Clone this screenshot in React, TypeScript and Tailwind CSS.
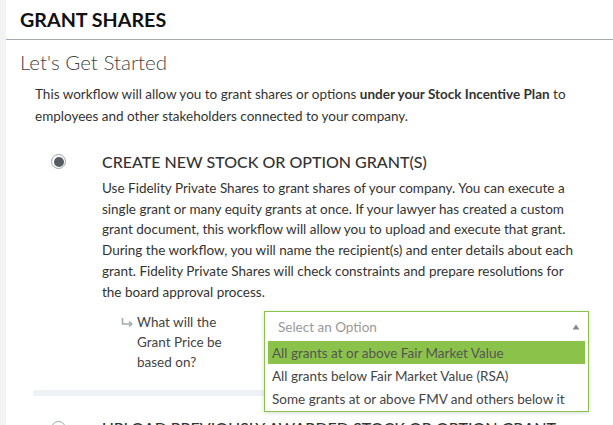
import React from "react";

function Radio({ checked }: { checked?: boolean }) {
  return (
    <div className="w-[15px] h-[15px] rounded-full border border-[#9aa3a8] bg-white flex items-center justify-center">
      {checked && <div className="w-[10px] h-[10px] rounded-full bg-[#555c63]" />}
    </div>
  );
}

export default function App() {
  return (
    <div
      className="flex w-[613px] h-[425px] overflow-hidden bg-white text-[#333]"
      style={{ fontFamily: "Lato, 'Noto Sans', sans-serif" }}
    >
      <div className="w-[6px] shrink-0 bg-[#f3f3f3]" />
      <div className="flex-1 min-w-0">
        <div className="h-[40px] border-b border-[#a3abae] pl-[14px] pt-[9px]">
          <h1 className="text-[19.7px] leading-[22px] font-bold text-[#111]">GRANT SHARES</h1>
        </div>
        <h2 className="pl-[14px] pt-[10px] text-[20.5px] leading-[24px] font-light text-[#444]">Let's Get Started</h2>
        <p className="ml-[29px] mt-[9px] text-[13.5px] leading-[22px] text-[#333]">
          This workflow will allow you to grant shares or options <b>under your Stock Incentive Plan</b> to employees and other stakeholders connected to your company.
        </p>
        <div className="ml-[27px] mr-[30px] mt-[24px] pb-[18px] border-b-[6px] border-[#eff2f5]">
          <div className="flex">
            <div className="w-[69px] shrink-0 pl-[18px] pt-[3px]">
              <Radio checked />
            </div>
            <div className="flex-1 min-w-0">
              <h3 className="text-[16px] leading-[22px] font-medium text-[#333]">CREATE NEW STOCK OR OPTION GRANT(S)</h3>
              <p className="mt-[5px] text-[13.5px] leading-[20.7px] text-[#333]">
                Use Fidelity Private Shares to grant shares of your company. You can execute a single grant or many equity grants at once. If your lawyer has created a custom grant document, this workflow will allow you to upload and execute that grant. During the workflow, you will name the recipient(s) and enter details about each grant. Fidelity Private Shares will check constraints and prepare resolutions for the board approval process.
              </p>
              <div className="mt-[9px] flex">
                <div className="w-[162px] shrink-0 pl-[19px] flex pt-[1px]">
                  <span className="w-[16px] shrink-0 pt-[6px]">
                    <svg width="12" height="9" viewBox="0 0 12 9" fill="none">
                      <path d="M1.5 0 V6 H10" stroke="#a0aaad" strokeWidth="1.6" />
                      <path d="M8 3.5 L10.8 6 L8 8.5" stroke="#a0aaad" strokeWidth="1.5" />
                    </svg>
                  </span>
                  <span className="w-[100px] text-[13.5px] leading-[20px] text-[#444]">What will the Grant Price be based on?</span>
                </div>
                <div className="relative w-[325px] h-[60px] shrink-0">
                  <div className="absolute left-0 top-0 w-[325px] border border-[#8bc34a] bg-white shadow-[0_1px_4px_rgba(0,0,0,0.15)] z-10">
                    <div className="h-[29px] flex items-center justify-between pl-[13px] pr-[8px]">
                      <span className="text-[13.5px] text-[#999]">Select an Option</span>
                      <svg width="8" height="6" viewBox="0 0 8 6">
                        <path d="M4 0.5 L7.5 5.5 L0.5 5.5 Z" fill="#888" />
                      </svg>
                    </div>
                    <ul className="px-[3px] pb-[1px]">
                      <li className="h-[23px] flex items-center pl-[4px] bg-[#8bc34a] text-[13.5px] text-[#555]">All grants at or above Fair Market Value</li>
                      <li className="h-[23px] flex items-center pl-[4px] text-[13.5px] text-[#444]">All grants below Fair Market Value (RSA)</li>
                      <li className="h-[23px] flex items-center pl-[4px] text-[13.5px] text-[#444]">Some grants at or above FMV and others below it</li>
                    </ul>
                  </div>
                </div>
              </div>
            </div>
          </div>
        </div>
        <div className="ml-[27px] mr-[30px] mt-[21px] flex">
          <div className="w-[69px] shrink-0 pl-[18px] pt-[4px]">
            <Radio />
          </div>
          <h3 className="text-[16px] leading-[22px] font-medium text-[#333] whitespace-nowrap">UPLOAD PREVIOUSLY AWARDED STOCK OR OPTION GRANT</h3>
        </div>
      </div>
    </div>
  );
}
